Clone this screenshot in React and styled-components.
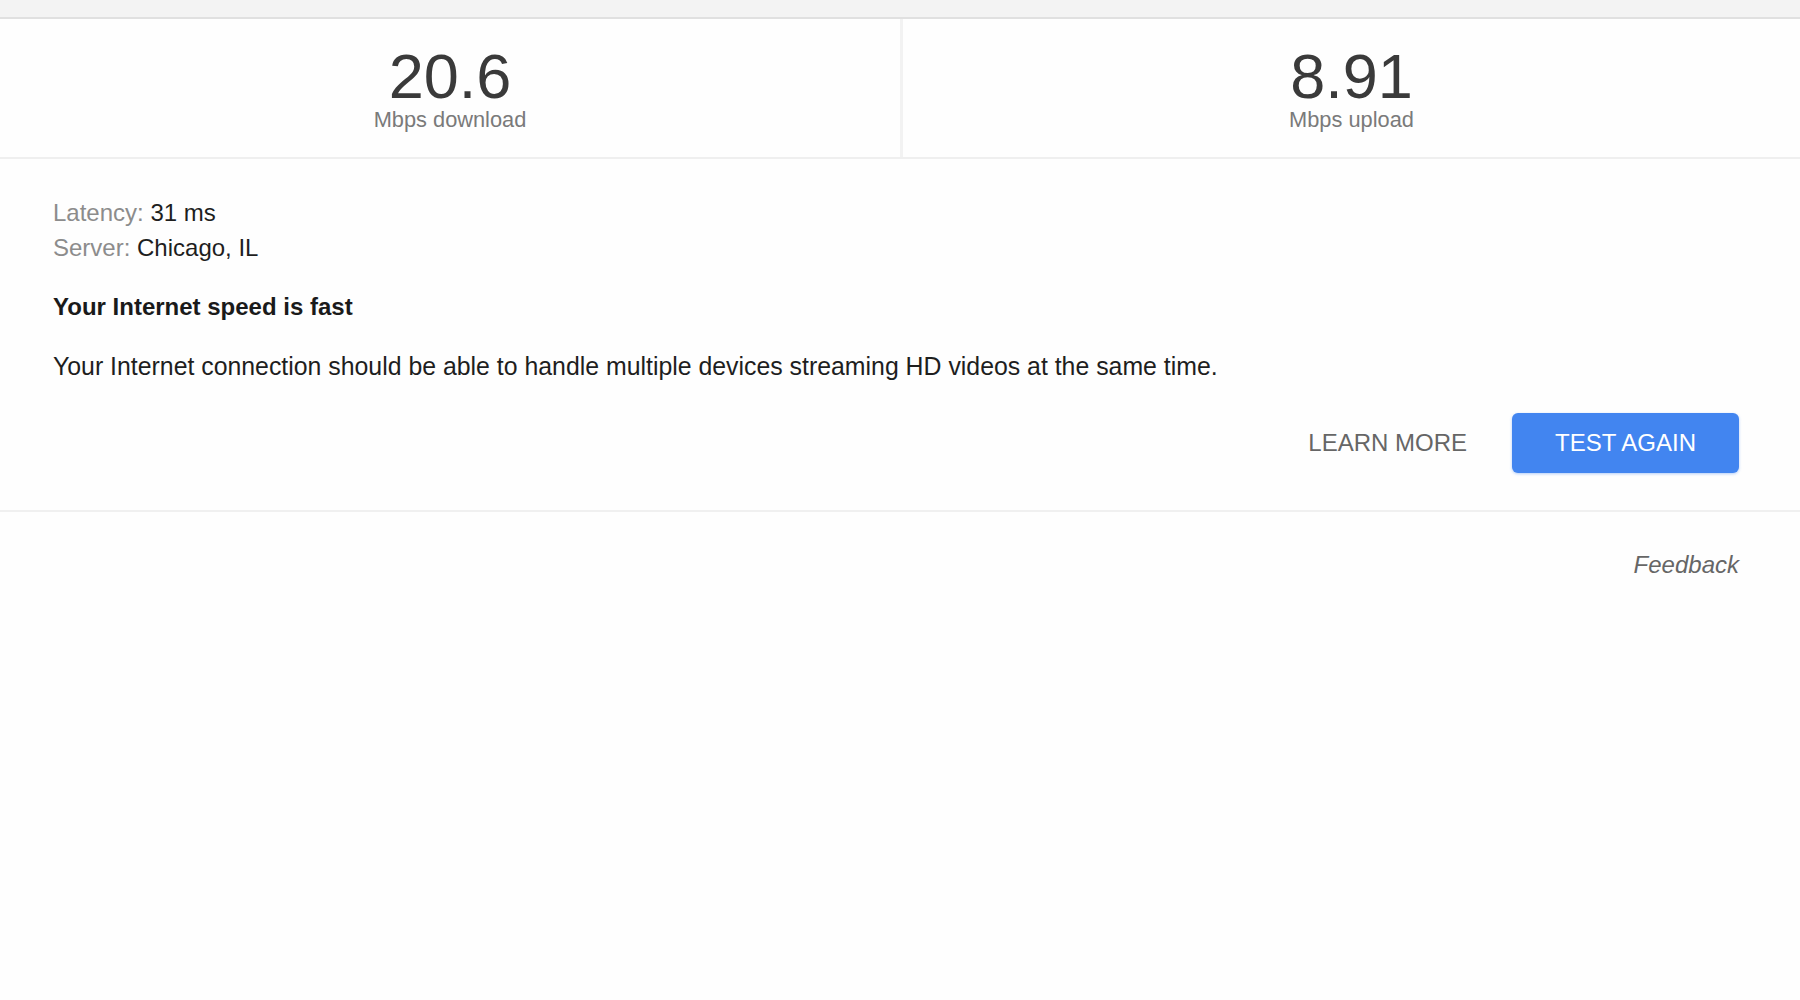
import React from 'react';
import styled, { createGlobalStyle } from 'styled-components';

const GlobalStyle = createGlobalStyle`
  body {
    margin: 0;
    background: #fefefe;
    font-family: 'Liberation Sans', Arial, sans-serif;
  }
`;

const TopBar = styled.div`
  height: 17px;
  background: #f3f3f3;
  border-bottom: 2px solid #e0e0e0;
`;

const Stats = styled.div`
  display: grid;
  grid-template-columns: 1fr 1fr;
  border-bottom: 2px solid #efefef;
`;

const Stat = styled.div`
  height: 138px;
  display: flex;
  flex-direction: column;
  align-items: center;
  padding-top: 26px;
  box-sizing: border-box;
  border-left: ${p => (p.divided ? '3px solid #f2f2f2' : 'none')};
`;

const Value = styled.div`
  font-size: 63px;
  font-weight: 300;
  color: #3a3a3a;
  line-height: 62px;
`;

const Unit = styled.div`
  font-size: 21.8px;
  color: #7a7a7a;
  margin-top: 0;
`;

const Details = styled.div`
  padding: 36px 61px 37px 53px;
  border-bottom: 2px solid #f0f0f0;
`;

const InfoLine = styled.div`
  font-size: 24px;
  line-height: 35px;
  color: #1e1e1e;
`;

const Label = styled.span`
  color: #8c8c8c;
`;

const Verdict = styled.div`
  margin-top: 28px;
  font-size: 24px;
  font-weight: 700;
  color: #1a1a1a;
`;

const Message = styled.p`
  margin: 32px 0 0;
  font-size: 24.85px;
  color: #1e1e1e;
`;

const Actions = styled.div`
  display: flex;
  justify-content: flex-end;
  align-items: center;
  gap: 45px;
  margin-top: 32px;
`;

const Button = styled.button`
  font-family: 'Liberation Sans', Arial, sans-serif;
  font-size: 24px;
  border: none;
  border-radius: 6px;
  height: 60px;
  padding: ${p => (p.primary ? '0 43px' : '0')};
  cursor: pointer;
  background: ${p => (p.primary ? '#4285f0' : 'transparent')};
  color: ${p => (p.primary ? '#ffffff' : '#666666')};
  box-shadow: ${p => (p.primary ? '0 1px 3px rgba(66,133,240,0.4)' : 'none')};
`;

const Footer = styled.div`
  display: flex;
  justify-content: flex-end;
  padding: 39px 61px 0 0;
`;

const FeedbackLink = styled.a`
  font-size: 24px;
  font-style: italic;
  color: #666;
  text-decoration: none;
`;

export default function App() {
  return (
    <>
      <GlobalStyle />
      <TopBar />
      <Stats>
        <Stat>
          <Value>20.6</Value>
          <Unit>Mbps download</Unit>
        </Stat>
        <Stat divided>
          <Value>8.91</Value>
          <Unit>Mbps upload</Unit>
        </Stat>
      </Stats>
      <Details>
        <InfoLine>
          <Label>Latency:</Label> 31 ms
        </InfoLine>
        <InfoLine>
          <Label>Server:</Label> Chicago, IL
        </InfoLine>
        <Verdict>Your Internet speed is fast</Verdict>
        <Message>
          Your Internet connection should be able to handle multiple devices streaming HD videos at the same time.
        </Message>
        <Actions>
          <Button>LEARN MORE</Button>
          <Button primary>TEST AGAIN</Button>
        </Actions>
      </Details>
      <Footer>
        <FeedbackLink href="#">Feedback</FeedbackLink>
      </Footer>
    </>
  );
}
